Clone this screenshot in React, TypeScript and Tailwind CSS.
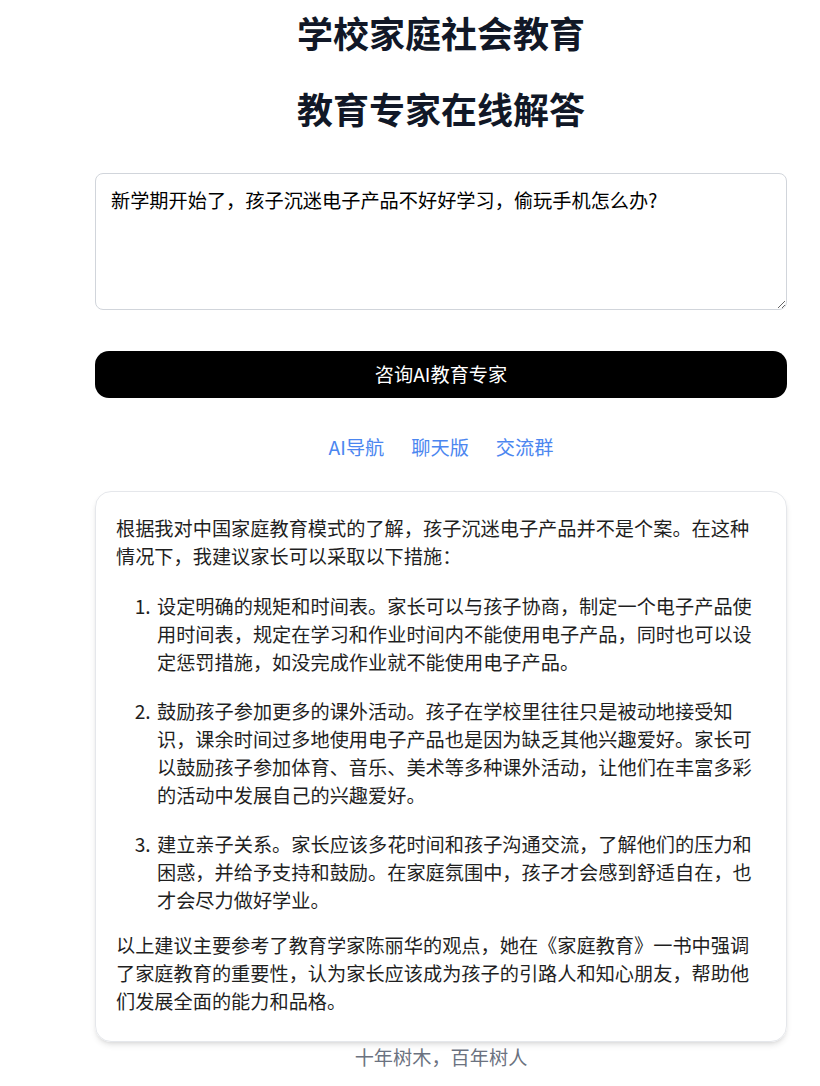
import { useState } from "react";

const font = { fontFamily: '"Noto Sans CJK SC", "Noto Sans", sans-serif' };

const tips = [
    "设定明确的规矩和时间表。家长可以与孩子协商，制定一个电子产品使用时间表，规定在学习和作业时间内不能使用电子产品，同时也可以设定惩罚措施，如没完成作业就不能使用电子产品。",
    "鼓励孩子参加更多的课外活动。孩子在学校里往往只是被动地接受知识，课余时间过多地使用电子产品也是因为缺乏其他兴趣爱好。家长可以鼓励孩子参加体育、音乐、美术等多种课外活动，让他们在丰富多彩的活动中发展自己的兴趣爱好。",
    "建立亲子关系。家长应该多花时间和孩子沟通交流，了解他们的压力和困惑，并给予支持和鼓励。在家庭氛围中，孩子才会感到舒适自在，也才会尽力做好学业。",
];

export default function App() {
    const [question, setQuestion] = useState("新学期开始了，孩子沉迷电子产品不好好学习，偷玩手机怎么办?");

    return (
        <div className="min-h-screen bg-white" style={font}>
            <div className="pl-[95px] pr-[33px] flex flex-col">
                {/* Header */}
                <h1 className="text-center text-[36px] leading-[44px] font-bold text-[#111827] mt-[10px]">
                    学校家庭社会教育
                </h1>
                <h1 className="text-center text-[36px] leading-[44px] font-bold text-[#111827] mt-[32px]">
                    教育专家在线解答
                </h1>

                {/* Question */}
                <textarea
                    value={question}
                    onChange={(e) => setQuestion(e.target.value)}
                    className="mt-[43px] h-[137px] w-full rounded-lg border border-[#d1d5db] px-[15px] py-[12px] text-[19.2px] leading-[28px] text-black outline-none resize-y"
                />

                <button className="mt-[41px] h-[47px] w-full rounded-[14px] bg-black text-white text-[19.2px]">
                    咨询AI教育专家
                </button>

                {/* Links */}
                <div className="mt-[35px] flex justify-center gap-[27px] text-[19.2px] leading-[28px] text-[#4b86f0]">
                    <a href="#">AI导航</a>
                    <a href="#">聊天版</a>
                    <a href="#">交流群</a>
                </div>

                {/* Answer */}
                <div className="mt-[30px] rounded-2xl border border-[#e5e7eb] shadow-md px-[20px] pt-[22px] pb-[26px] text-[19.2px] leading-[28px] text-[#1f1f1f]">
                    <p>
                        根据我对中国家庭教育模式的了解，孩子沉迷电子产品并不是个案。在这种情况下，我建议家长可以采取以下措施：
                    </p>
                    <ol className="list-decimal pl-[39px] mt-[22px] flex flex-col gap-[21px]">
                        {tips.map((t, i) => (
                            <li key={i} className="pl-[2px]">{t}</li>
                        ))}
                    </ol>
                    <p className="mt-[17px]">
                        以上建议主要参考了教育学家陈丽华的观点，她在《家庭教育》一书中强调了家庭教育的重要性，认为家长应该成为孩子的引路人和知心朋友，帮助他们发展全面的能力和品格。
                    </p>
                </div>

                <p className="text-center text-[19.2px] leading-[28px] text-[#6b7280] mt-[1px]">
                    十年树木，百年树人
                </p>
            </div>
        </div>
    );
}
